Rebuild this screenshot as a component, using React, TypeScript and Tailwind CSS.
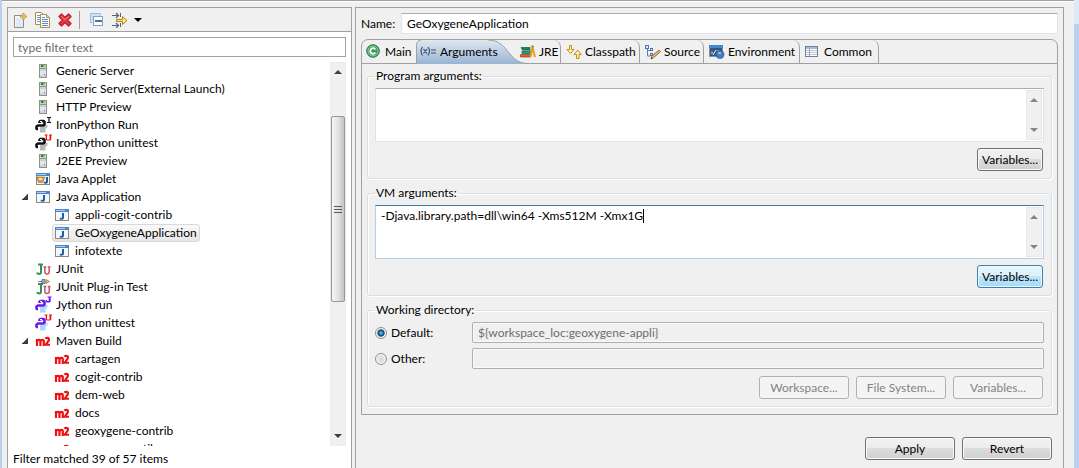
import { useState } from "react";
import type { ReactNode } from "react";

/* ---------- icons ---------- */

function Icon({ children, className = "" }: { children: ReactNode; className?: string }) {
  return (
    <svg viewBox="0 0 16 16" aria-hidden="true" className={"size-4 shrink-0 " + className}>
      {children}
    </svg>
  );
}

const ServerIcon = () => (
  <Icon>
    <rect x="4.5" y="1.5" width="7" height="13" fill="#e4e8d8" stroke="#8f957c" />
    <rect x="5" y="2" width="6" height="3" fill="#c9d6c0" />
    <rect x="6" y="2" width="2" height="2" fill="#0a8a2c" />
    <rect x="8" y="2" width="2" height="2" fill="#7bc47f" />
    <rect x="5" y="5" width="6" height="1" fill="#8b93a8" />
    <rect x="6" y="8" width="4" height="5" fill="#dfe6fb" />
    <path d="M5 7h6M5 13h6" stroke="#b4bcd8" />
    <rect x="9" y="11" width="1" height="1" fill="#5a6ea8" />
  </Icon>
);

function PythonIcon({ body, tail, letter, letterColor }: { body: string; tail: string; letter: string; letterColor: string }) {
  return (
    <Icon className="overflow-visible">
      <path d="M5 14.500h4.500v-1.500H6v-2h4l1.500-1.500V8" fill="none" stroke={tail} strokeWidth="2.200" strokeLinejoin="round" />
      <path d="M4.500 6V5l1-1h3l1 1v2.500l-1 1H3L1.500 9.500v2l.5.500h1" fill="none" stroke={body} strokeWidth="2.600" strokeLinejoin="round" />
      <rect x="5" y="4" width="2" height="1" fill="#fff" />
      {letter === "I" && <path d="M12 0h4v1h-1.400v4H16v1h-4V5h1.400V1H12z" fill={letterColor} />}
      {letter === "U" && <path d="M9.500-.5h3v1H12v4h2.500v-4H14v-1h3v1h-.7v4l-1 1h-3.600l-1-1v-4h-1.200z" fill={letterColor} />}
      {letter === "J" && <path d="M12.500-.5h4v1h-.8v4l-1 1h-3l-1-1v-1.500h1.500v1h1.500v-3.500h-1.200z" fill={letterColor} />}
    </Icon>
  );
}

function WindowFrame() {
  return (
    <>
      <rect x="1.500" y="2.500" width="13" height="11" fill="#f3f8fe" stroke="#8c8a73" />
      <rect x="1" y="2" width="14" height="3" fill="#4b86c6" />
      <rect x="2" y="3" width="9" height="1" fill="#a9cdf0" />
    </>
  );
}

const JavaAppIcon = () => (
  <Icon>
    <WindowFrame />
    <path d="M9 6v4.200q0 1.600-1.600 1.600-.9 0-1.400-.5" fill="none" stroke="#1f5f9f" strokeWidth="2" />
  </Icon>
);

const AppletIcon = () => (
  <Icon>
    <WindowFrame />
    <path d="M2 6h8l-1 2-1 3-2 1-1-2-1 2-1-2-1-1z" fill="#e0a04c" stroke="#9b5d1c" strokeWidth=".6" />
    <path d="M4 7l1 2 1-2 1 2" fill="none" stroke="#fff" strokeWidth=".8" />
    <path d="M12 6v4.200q0 1.600-1.600 1.600-.9 0-1.400-.5" fill="none" stroke="#1f5f9f" strokeWidth="2" />
  </Icon>
);

function JuMark() {
  return (
    <>
      <path d="M3 3.500h5M6 3.500V11q0 2-1.900 2-1.600 0-2.100-1.500" fill="none" stroke="#3b8c5c" strokeWidth="2" />
      <path d="M8.500 6h2.800M12.800 6h2.700M9.900 6v5q0 2 2.100 2t2.200-2V6" fill="none" stroke="#c8506a" strokeWidth="1.500" />
    </>
  );
}

const JUnitIcon = () => (
  <Icon>
    <JuMark />
  </Icon>
);

const JUnitPluginIcon = () => (
  <Icon className="overflow-visible">
    <g transform="translate(0 1.500)">
      <JuMark />
    </g>
    <path d="M3.500 2.500h4" stroke="#5b7fb0" />
    <path d="M7 .5h3v4H7z" fill="#8fb2dc" stroke="#40689c" strokeWidth=".8" />
    <path d="M11 .5l3.500 2-3.500 2z" fill="#f2c94c" stroke="#a5791c" strokeWidth=".8" />
  </Icon>
);

const MavenIcon = () => (
  <Icon>
    <path
      d="M2 13V6M2 8q.8-1.200 2-1.200 1.400 0 1.400 1.700V13M5.400 8.200q.8-1.400 2-1.400 1.400 0 1.400 1.700V13"
      fill="none"
      stroke="#f01010"
      strokeWidth="2.200"
    />
    <path d="M10.500 5.700Q11 4.900 12.300 4.900q1.700 0 1.700 1.600 0 1.200-1.500 2.700L10.700 11.800H15" fill="none" stroke="#f01010" strokeWidth="2.100" />
  </Icon>
);

const NewIcon = () => (
  <Icon>
    <path d="M1.500 3.500h9v12h-9z" fill="#f2f8ff" stroke="#9a8f6a" />
    <path d="M3 6h7v9H3z" fill="#dcebfa" />
    <path d="M10.500 1l1.200 2.300L14 4.500l-2.300 1.200L10.500 8 9.300 5.700 7 4.500l2.300-1.200z" fill="#fff6c8" stroke="#b88a1c" />
    <path d="M10.500 3v3M9 4.500h3" stroke="#e2b93a" />
  </Icon>
);

const CopyIcon = () => (
  <Icon>
    <path d="M.5.500h6l2 2v10h-8z" fill="#fff" stroke="#a58f55" />
    <path d="M2 3.500h4M2 5.500h3M2 7.500h3M2 9.500h3" stroke="#6a95cc" />
    <path d="M5.500 2.500h6l3 3v10h-9z" fill="#fff" stroke="#a58f55" />
    <path d="M11.500 2.500v3h3" fill="#e9d9a8" stroke="#a58f55" />
    <path d="M7 5.500h3M7 7.500h6M7 9.500h6M7 11.500h6M7 13.500h6" stroke="#5f8cc6" />
  </Icon>
);

const DeleteIcon = () => (
  <Icon>
    <path
      d="M2 4.500L4.500 2 8 5.500 11.500 2 14 4.500 10.500 8l3.500 3.500-2.500 2.500L8 10.500 4.500 14 2 11.500 5.500 8z"
      fill="#e33a45"
      stroke="#c01f2c"
      strokeWidth="1.400"
      strokeLinejoin="round"
    />
    <path d="M4 4.200L8 7.500l4-3.300" fill="none" stroke="#f4878b" />
  </Icon>
);

const CollapseIcon = () => (
  <Icon>
    <path d="M1.500 10.500v-9h10v2" fill="#cfe2f5" stroke="#9dbbdc" />
    <path d="M1.500 10.500h2" stroke="#9dbbdc" />
    <rect x="4.500" y="4.500" width="9" height="9" fill="#fff" stroke="#7ba2cf" />
    <path d="M6 9h7" stroke="#1c3f7c" strokeWidth="1.500" />
  </Icon>
);

const FilterIcon = () => (
  <Icon>
    <path d="M0 3.500h6M4 1l2.500 2.500L4 6M0 13.500h6M4 11l2.500 2.500L4 16" fill="none" stroke="#4f6478" strokeWidth="1.200" />
    <path d="M8.500 1v4M8.500 11v4" stroke="#4f6478" />
    <path d="M4.500 7.500h6V4.500l4.500 4-4.500 4V9.500h-6z" fill="#fbe39a" stroke="#b58217" />
  </Icon>
);

const MainTabIcon = () => (
  <Icon>
    <circle cx="7" cy="7" r="6.300" fill="#3f9a5c" stroke="#277a45" />
    <circle cx="7" cy="7" r="5" fill="none" stroke="#a9d8b5" strokeWidth=".8" />
    <path d="M9.400 5.400A2.800 2.800 0 1 0 9.400 8.600" fill="none" stroke="#fff" strokeWidth="1.800" />
  </Icon>
);

const ArgumentsTabIcon = () => (
  <Icon>
    <path d="M2.500 3Q-.5 7 2.500 11.500M8 3q3 4 0 8.500" fill="none" stroke="#3c5070" strokeWidth="1.200" />
    <path d="M3.500 5l3.500 4.500M7 5L3.500 9.500M11 6h5M11 9h5" stroke="#3c5070" strokeWidth="1.200" />
  </Icon>
);

const JreTabIcon = () => (
  <Icon>
    <path d="M1 3.500h9V6H2.500z" fill="#18875a" stroke="#0c5f3d" strokeWidth=".7" />
    <path d="M2 7h9v2.500H2z" fill="#2b9c90" stroke="#12635c" strokeWidth=".7" />
    <path d="M.5 10.500h10V13H.5z" fill="#d8652a" stroke="#98400f" strokeWidth=".7" />
    <path d="M10.500 13l2-10 2.500 10" fill="none" stroke="#e4a12a" strokeWidth="2" />
    <circle cx="12.500" cy="2.500" r="1.300" fill="#c8841a" />
  </Icon>
);

const ClasspathTabIcon = () => (
  <Icon>
    <path d="M3.500 1.500h2v4H8L4.500 9.500 1 5.500h2.500z" fill="#fff0a8" stroke="#c08f1c" />
    <path d="M10.500 14.500h2.500v-4h2.500L11.700 6 8 10.500h2.500z" fill="#fff0a8" stroke="#c08f1c" />
  </Icon>
);

const SourceTabIcon = () => (
  <Icon>
    <path d="M2.500 4v8h3M2.500 6.500h3" fill="none" stroke="#5f7fae" />
    <rect x=".5" y="1.500" width="3" height="3" fill="#dbe8f8" stroke="#4f76ad" />
    <rect x="5.500" y="4.500" width="2" height="2" fill="#dbe8f8" stroke="#4f76ad" />
    <rect x="5.500" y="9.500" width="2" height="2" fill="#dbe8f8" stroke="#4f76ad" />
    <path d="M6 15l1-3 7-6 1.500 1.700-7 6z" fill="#e6b877" stroke="#8c6234" strokeWidth=".9" />
    <path d="M6 15l.6-1.800 1.200 1.200z" fill="#333" />
  </Icon>
);

const EnvironmentTabIcon = () => (
  <Icon>
    <rect x=".5" y="1.500" width="13" height="11" fill="#33567f" stroke="#7d93b0" />
    <rect x="0" y="1" width="14" height="3" fill="#4688cf" />
    <path d="M3 10V7.500M4 11l3-5M8 7h3" stroke="#e8f0fa" />
    <circle cx="11" cy="10.500" r="4" fill="#3d7dc0" stroke="#235a99" strokeWidth=".7" />
    <path d="M8.500 9q2-2 4 0-1 2-3 1z" fill="#8fc0ea" />
  </Icon>
);

const CommonTabIcon = () => (
  <Icon>
    <rect x=".5" y="2.500" width="12" height="10" fill="#fff" stroke="#6e7f9d" />
    <rect x="1" y="3" width="11" height="2" fill="#a8b9d6" />
    <path d="M1 6.500h11M1 8.500h11M1 10.500h11" stroke="#b9c4d8" />
    <path d="M4.500 5v7" stroke="#8d9cb8" />
  </Icon>
);

const ironRun = <PythonIcon body="#111111" tail="#b9b9b9" letter="I" letterColor="#111111" />;
const ironTest = <PythonIcon body="#111111" tail="#b9b9b9" letter="U" letterColor="#f01414" />;
const jythonRun = <PythonIcon body="#6a18f0" tail="#a9d8fb" letter="J" letterColor="#6a18f0" />;
const jythonTest = <PythonIcon body="#6a18f0" tail="#a9d8fb" letter="U" letterColor="#f01414" />;

function Arrow({ down = false, className = "text-[#404040]" }: { down?: boolean; className?: string }) {
  return (
    <svg viewBox="0 0 8 4" aria-hidden="true" className={"h-1 w-2 shrink-0 " + className}>
      <path d={down ? "M0 0h8L4 4z" : "M0 4h8L4 0z"} fill="currentColor" />
    </svg>
  );
}

/* ---------- tree ---------- */

type Row = { label: string; icon: ReactNode; child?: boolean; open?: boolean };

const rows: Row[] = [
  { label: "Generic Server", icon: <ServerIcon /> },
  { label: "Generic Server(External Launch)", icon: <ServerIcon /> },
  { label: "HTTP Preview", icon: <ServerIcon /> },
  { label: "IronPython Run", icon: ironRun },
  { label: "IronPython unittest", icon: ironTest },
  { label: "J2EE Preview", icon: <ServerIcon /> },
  { label: "Java Applet", icon: <AppletIcon /> },
  { label: "Java Application", icon: <JavaAppIcon />, open: true },
  { label: "appli-cogit-contrib", icon: <JavaAppIcon />, child: true },
  { label: "GeOxygeneApplication", icon: <JavaAppIcon />, child: true },
  { label: "infotexte", icon: <JavaAppIcon />, child: true },
  { label: "JUnit", icon: <JUnitIcon /> },
  { label: "JUnit Plug-in Test", icon: <JUnitPluginIcon /> },
  { label: "Jython run", icon: jythonRun },
  { label: "Jython unittest", icon: jythonTest },
  { label: "Maven Build", icon: <MavenIcon />, open: true },
  { label: "cartagen", icon: <MavenIcon />, child: true },
  { label: "cogit-contrib", icon: <MavenIcon />, child: true },
  { label: "dem-web", icon: <MavenIcon />, child: true },
  { label: "docs", icon: <MavenIcon />, child: true },
  { label: "geoxygene-contrib", icon: <MavenIcon />, child: true },
  { label: "geoxygene-util", icon: <MavenIcon />, child: true },
];

function TreeRow({ row, selected, onSelect }: { row: Row; selected: boolean; onSelect: () => void }) {
  return (
    <li className={"flex h-[18px] items-center " + (row.child ? "pl-[31px]" : "pl-3")}>
      <span className="flex w-[13px] shrink-0 pl-0.5">
        {row.open && (
          <svg viewBox="0 0 6 6" aria-hidden="true" className="size-1.5">
            <path d="M6 0v6H0z" fill="#404040" stroke="#202020" strokeWidth=".5" />
          </svg>
        )}
      </span>
      <button
        type="button"
        onClick={onSelect}
        className={
          "flex h-[18px] items-center gap-[5px] rounded-[3px] border pr-0.5 pl-px whitespace-nowrap " +
          (selected ? "border-[#d9d9d9] bg-linear-to-b from-[#fafafa] to-[#e6e6e6]" : "border-transparent")
        }
      >
        {row.icon}
        {row.label}
      </button>
    </li>
  );
}

function Sidebar() {
  const [selected, setSelected] = useState("GeOxygeneApplication");
  return (
    <aside className="flex w-[345px] shrink-0 flex-col border border-b-0 border-[#a0a0a0] bg-white">
      <div className="flex h-6 shrink-0 items-center border-b border-[#a0a0a0] bg-[#f0f0f0] pl-[5px]">
        <button type="button" aria-label="New"><NewIcon /></button>
        <button type="button" aria-label="Duplicate" className="ml-1.5"><CopyIcon /></button>
        <button type="button" aria-label="Delete" className="ml-1.5"><DeleteIcon /></button>
        <span className="ml-1.5 h-[18px] w-px bg-[#a0a0a0]" />
        <button type="button" aria-label="Collapse all" className="ml-[9px]"><CollapseIcon /></button>
        <button type="button" aria-label="Filter" className="ml-[7px]"><FilterIcon /></button>
        <button type="button" aria-label="Filter menu" className="ml-1.5"><Arrow down className="text-black" /></button>
      </div>
      <input
        aria-label="Filter text"
        placeholder="type filter text"
        className="mx-[5px] mt-[5px] h-5 shrink-0 border border-[#a3a3a3] bg-white px-1 text-[#6d6d6d] outline-none placeholder:text-[#6d6d6d]"
      />
      <div className="mt-[5px] flex min-h-0 flex-1 overflow-hidden pr-[5px]">
        <ul className="min-w-0 flex-1 overflow-hidden">
          {rows.map((row) => (
            <TreeRow key={row.label} row={row} selected={row.label === selected} onSelect={() => setSelected(row.label)} />
          ))}
        </ul>
        <div className="flex w-4 shrink-0 flex-col items-center border border-[#ececec] bg-[#f0f0f0] py-[7px]" aria-hidden="true">
          <Arrow />
          <div className="flex w-full flex-1 flex-col pt-[42px] pb-[132px]">
            <div className="flex flex-1 flex-col items-center justify-center gap-0.5 rounded-[2px] border border-[#979797] bg-linear-to-r from-[#f5f5f5] via-[#e4e4e6] to-[#c2c3c6]">
              <span className="h-px w-2 bg-[#5a5a5a]" />
              <span className="h-px w-2 bg-[#5a5a5a]" />
              <span className="h-px w-2 bg-[#5a5a5a]" />
            </div>
          </div>
          <Arrow down />
        </div>
      </div>
      <p className="h-[22px] shrink-0 bg-white pt-[5px] pl-[5px]">Filter matched 39 of 57 items</p>
    </aside>
  );
}

/* ---------- form controls ---------- */

function Button({ children, wide, focused, disabled }: { children: ReactNode; wide?: boolean; focused?: boolean; disabled?: boolean }) {
  const tone = disabled
    ? "border-[#adb2b5] bg-[#f4f4f4] text-[#838383]"
    : focused
      ? "border-[#3c7fb1] bg-linear-[to_bottom,#eaf6fd_0%,#d9f0fc_50%,#bee6fd_50%,#a7d9f5_100%] shadow-[inset_0_0_0_1px_#eefaff]"
      : "border-[#707070] bg-linear-[to_bottom,#f2f2f2_0%,#ebebeb_50%,#dddddd_50%,#cfcfcf_100%] shadow-[inset_0_0_0_1px_#fafafa]";
  return (
    <button
      type="button"
      disabled={disabled}
      className={"h-[23px] rounded-[3px] border text-center leading-4 whitespace-nowrap " + (wide ? "w-[90px] " : "w-[66px] ") + tone}
    >
      {children}
    </button>
  );
}

function Group({ title, children }: { title: string; children: ReactNode }) {
  return (
    <fieldset className="min-w-0 rounded-[3px] border border-[#d5dfe5] px-[7px] pb-[7px] shadow-[inset_1px_1px_0_#fff,1px_1px_0_#fff]">
      <legend className="px-px leading-4">{title}</legend>
      {children}
    </fieldset>
  );
}

function ArgumentBox({ label, text, focused }: { label: string; text: string; focused?: boolean }) {
  return (
    <div
      className={
        "relative flex h-[54px] border bg-white p-px " +
        (focused ? "border-[#b5cfe7] border-t-[#3d7bad]" : "border-[#e2e3ea] border-t-[#abadb3]")
      }
    >
      <textarea
        aria-label={label}
        defaultValue={text}
        spellCheck={false}
        className="min-w-0 flex-1 resize-none overflow-hidden bg-transparent px-1 py-px leading-4 outline-none"
      />
      {focused && <span className="absolute top-[3px] left-[267px] h-3.5 w-px bg-black" />}
      <div className="flex w-4 flex-col items-center justify-between border border-[#e8e8e8] bg-[#f0f0f0] py-[7px]" aria-hidden="true">
        <Arrow className="text-[#858585]" />
        <Arrow down className="text-[#858585]" />
      </div>
    </div>
  );
}

function DirectoryRow({ label, value, checked, onPick }: { label: string; value: string; checked: boolean; onPick: () => void }) {
  return (
    <div className="flex h-[21px] items-center">
      <label className="flex w-[97px] shrink-0 items-center gap-1">
        <input
          type="radio"
          name="directory"
          checked={checked}
          onChange={onPick}
          className="size-3 shrink-0 appearance-none rounded-full border border-[#8e8f8f] bg-radial from-[#d2d5d9] to-[#f8f8f8] shadow-[inset_0_0_0_1px_#f4f4f4] checked:bg-radial checked:from-[#3fb4e4] checked:from-10% checked:via-[#123f63] checked:via-45% checked:to-[#f4f4f4] checked:to-60%"
        />
        {label}
      </label>
      <input
        aria-label={label + " directory"}
        defaultValue={value}
        disabled
        className="h-[21px] min-w-0 flex-1 rounded-[2px] border border-[#afafaf] bg-[#f0f0f0] px-[5px] text-[#6d6d6d] shadow-[inset_0_0_0_1px_#fafafa]"
      />
    </div>
  );
}

/* ---------- tabs ---------- */

function Tab({ icon, label, className }: { icon: ReactNode; label: string; className: string }) {
  return (
    <button
      type="button"
      role="tab"
      aria-selected="false"
      className={"flex h-[23px] shrink-0 items-center gap-[3px] whitespace-nowrap " + className}
    >
      {icon}
      {label}
    </button>
  );
}

const closedEdge = "rounded-tr-[7px] border-r border-[#a0a0a0] pl-[5px]";

function TabBar() {
  return (
    <div role="tablist" className="flex h-6 border-b border-[#a0a0a0]">
      <Tab icon={<MainTabIcon />} label="Main" className="w-[54px] pl-1" />
      <button
        type="button"
        role="tab"
        aria-selected="true"
        className="relative -mb-px flex h-6 w-[99px] shrink-0 items-center gap-[3px] pb-px pl-1 whitespace-nowrap"
      >
        <svg viewBox="0 0 112 24" aria-hidden="true" className="absolute top-0 left-0 h-6 w-28">
          <defs>
            <linearGradient id="active-tab" x1="0" y1="0" x2="0" y2="1">
              <stop offset="0" stopColor="#dfe8f2" />
              <stop offset="1" stopColor="#99b4d1" />
            </linearGradient>
          </defs>
          <path
            d="M.5 24V5Q.5 1 5 0H72C84 0 88 7 94 14S104 23 112 23.500V24z"
            fill="url(#active-tab)"
          />
          <path d="M.5 24V5Q.5 1 5 0M72 0C84 0 88 7 94 14S104 23 112 23.500" fill="none" stroke="#a0a0a0" />
        </svg>
        <span className="relative flex items-center gap-1">
          <ArgumentsTabIcon />
          Arguments
        </span>
      </button>
      <Tab icon={<JreTabIcon />} label="JRE" className={"w-[46px] " + closedEdge} />
      <Tab icon={<ClasspathTabIcon />} label="Classpath" className={"w-[79px] " + closedEdge} />
      <Tab icon={<SourceTabIcon />} label="Source" className={"w-16 " + closedEdge} />
      <Tab icon={<EnvironmentTabIcon />} label="Environment" className={"w-24 " + closedEdge} />
      <Tab icon={<CommonTabIcon />} label="Common" className={"w-[79px] " + closedEdge} />
    </div>
  );
}

/* ---------- page ---------- */

export default function App() {
  const [directory, setDirectory] = useState("default");
  return (
    <div className="flex h-screen min-h-[468px] overflow-hidden bg-[#f0f0f0] font-['Lato','Open_Sans',sans-serif] text-xs leading-4 text-black">
      <div className="w-0.5 shrink-0 bg-[#b9d1ea]" />
      <div className="flex min-w-0 flex-1 border-t border-[#a0a0a0] pt-1.5 pr-[10px] pl-[5px] shadow-[inset_0_1px_0_#fff]">
        <Sidebar />
        <main className="ml-[3px] flex min-w-0 flex-1 flex-col border border-b-0 border-[#a0a0a0] px-[5px] pt-[5px]">
          <label className="flex h-[21px] items-center">
            <span className="w-10 shrink-0">Name:</span>
            <input
              defaultValue="GeOxygeneApplication"
              className="h-[21px] min-w-0 flex-1 border border-[#e2e3ea] border-t-[#abadb3] bg-white px-[5px] outline-none"
            />
          </label>
          <section className="mt-[5px] rounded-t-[7px] border border-[#a0a0a0]">
            <TabBar />
            <div className="flex flex-col gap-1.5 px-[5px] pt-1 pb-[7px]">
              <Group title="Program arguments:">
                <div className="pt-1">
                  <ArgumentBox label="Program arguments" text="" />
                </div>
                <div className="mt-1.5 flex justify-end pr-px">
                  <Button>Variables...</Button>
                </div>
              </Group>
              <Group title="VM arguments:">
                <div className="pt-1">
                  <ArgumentBox label="VM arguments" text="-Djava.library.path=dll\win64 -Xms512M -Xmx1G" focused />
                </div>
                <div className="mt-1.5 flex justify-end pr-px">
                  <Button focused>Variables...</Button>
                </div>
              </Group>
              <Group title="Working directory:">
                <div className="flex flex-col gap-[5px] pt-1">
                  <DirectoryRow
                    label="Default:"
                    value="${workspace_loc:geoxygene-appli}"
                    checked={directory === "default"}
                    onPick={() => setDirectory("default")}
                  />
                  <DirectoryRow label="Other:" value="" checked={directory === "other"} onPick={() => setDirectory("other")} />
                </div>
                <div className="mt-[7px] flex justify-end gap-[7px] pr-px">
                  <Button wide disabled>Workspace...</Button>
                  <Button wide disabled>File System...</Button>
                  <Button wide disabled>Variables...</Button>
                </div>
              </Group>
            </div>
          </section>
          <div className="mt-[22px] flex justify-end gap-[7px] pr-1.5">
            <Button wide>Apply</Button>
            <Button wide>Revert</Button>
          </div>
        </main>
      </div>
      <div className="w-[5px] shrink-0 bg-linear-[to_bottom,#dce9f6_0px,#dce9f6_24px,#b9d1ea_24px]" />
    </div>
  );
}
